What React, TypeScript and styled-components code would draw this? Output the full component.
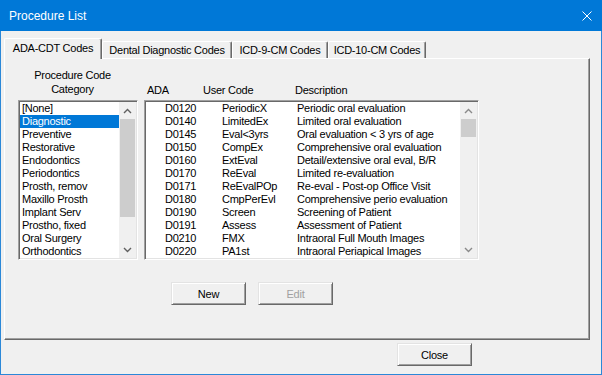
import React from 'react'
import styled, { createGlobalStyle } from 'styled-components'

const GlobalStyle = createGlobalStyle`
    html, body {
        margin: 0;
        padding: 0;
        background: #f0f0f0;
    }
    body {
        font-family: "Liberation Sans", Arial, sans-serif;
        font-size: 11px;
        letter-spacing: -0.25px;
        color: #000;
    }
    * {
        box-sizing: border-box;
    }
`

const Window = styled.div`
    width: 602px;
    height: 375px;
    display: flex;
    flex-direction: column;
    background: #f0f0f0;
    overflow: hidden;
`

const TitleBar = styled.div`
    height: 31px;
    flex: none;
    background: #0078d7;
    color: #fff;
    display: flex;
    align-items: center;
    justify-content: space-between;
    padding: 0 10px 0 9px;
    font-size: 12px;
    letter-spacing: 0;
`

const Body = styled.div`
    flex: 1;
    display: flex;
    flex-direction: column;
    border: 1px solid #2b88d8;
    border-top: none;
`

const TabStrip = styled.div`
    display: flex;
    align-items: flex-end;
    height: 21px;
    margin: 7px 0 -1px 3px;
    position: relative;
    z-index: 1;
`

const Tab = styled.div<{ $w: number; $selected?: boolean }>`
    width: ${p => p.$w}px;
    height: ${p => (p.$selected ? 21 : 17)}px;
    margin-bottom: ${p => (p.$selected ? 0 : 1)}px;
    display: flex;
    align-items: center;
    justify-content: center;
    background: #f0f0f0;
    border-top: 1px solid #fff;
    border-left: 1px solid #fff;
    border-right: 1px solid #696969;
    border-radius: 2px 2px 0 0;
    box-shadow: inset -1px 0 0 #a0a0a0;
    padding-bottom: ${p => (p.$selected ? 2 : 0)}px;
    white-space: nowrap;
`

const Panel = styled.div`
    margin-left: 3px;
    width: 586px;
    height: 282px;
    flex: none;
    border-top: 1px solid #fff;
    border-left: 1px solid #fff;
    border-right: 1px solid #696969;
    border-bottom: 1px solid #696969;
    box-shadow: inset -1px -1px 0 #a0a0a0;
    padding: 9px 0 0 13px;
    display: flex;
    flex-direction: column;
`

const TopRow = styled.div`
    display: flex;
    align-items: flex-start;
    gap: 6px;
`

const Column = styled.div<{ $w: number }>`
    width: ${p => p.$w}px;
    display: flex;
    flex-direction: column;
`

const CategoryLabel = styled.div`
    height: 28px;
    line-height: 14px;
    text-align: center;
    padding-right: 11px;
    margin-bottom: 4px;
`

const HeaderRow = styled.div`
    display: grid;
    grid-template-columns: 56px 92px 1fr;
    height: 14px;
    line-height: 14px;
    margin-top: 15px;
    margin-bottom: 3px;
    padding-left: 3px;
`

const ListFrame = styled.div<{ $h: number }>`
    height: ${p => p.$h}px;
    display: flex;
    background: #fff;
    border: 1px solid;
    border-color: #a0a0a0 #fff #fff #a0a0a0;
    box-shadow: inset 1px 1px 0 #696969, inset -1px -1px 0 #e3e3e3;
    padding: 1px;
    overflow: hidden;
`

const Items = styled.div`
    flex: 1;
    min-width: 0;
    overflow: hidden;
`

const CategoryItem = styled.div<{ $selected?: boolean }>`
    height: 13px;
    line-height: 13px;
    padding-left: 2px;
    white-space: nowrap;
    background: ${p => (p.$selected ? '#0078d7' : 'transparent')};
    color: ${p => (p.$selected ? '#fff' : '#000')};
`

const CodeRow = styled.div`
    display: grid;
    grid-template-columns: 57px 75px 1fr;
    height: 13px;
    line-height: 13px;
    padding-left: 19px;
    white-space: nowrap;
`

const ScrollBar = styled.div`
    width: 17px;
    flex: none;
    display: flex;
    flex-direction: column;
    background: #f0f0f0;
`

const ArrowBox = styled.div`
    height: 17px;
    flex: none;
    display: flex;
    align-items: center;
    justify-content: center;
`

const Track = styled.div`
    flex: 1;
`

const Thumb = styled.div<{ $h: number }>`
    height: ${p => p.$h}px;
    margin: 0 1px;
    background: #cdcdcd;
`

const ButtonRow = styled.div`
    display: flex;
    gap: 12px;
    margin-top: 22px;
    padding-left: 153px;
`

const Button = styled.div<{ $disabled?: boolean }>`
    width: 75px;
    height: 23px;
    display: flex;
    align-items: center;
    justify-content: center;
    background: #f0f0f0;
    border: 1px solid;
    border-color: #e3e3e3 #696969 #696969 #e3e3e3;
    box-shadow: inset 1px 1px 0 #fff, inset -1px -1px 0 #a0a0a0;
    color: ${p => (p.$disabled ? '#a0a0a0' : '#000')};
`

const Footer = styled.div`
    display: flex;
    margin-top: 3px;
    padding-left: 396px;
`

const Chevron = ({ up, color }: { up?: boolean; color: string }) => (
    <svg width="9" height="6" viewBox="0 0 9 6">
        <polyline
            points={up ? '1,5 4.5,1.5 8,5' : '1,1 4.5,4.5 8,1'}
            fill="none"
            stroke={color}
            strokeWidth="1.4"
        />
    </svg>
)

const Scroller = ({ thumb, color }: { thumb: number; color: string }) => (
    <ScrollBar>
        <ArrowBox><Chevron up color={color} /></ArrowBox>
        <Track><Thumb $h={thumb} /></Track>
        <ArrowBox><Chevron color={color} /></ArrowBox>
    </ScrollBar>
)

const tabs = [
    { label: 'ADA-CDT Codes', w: 98 },
    { label: 'Dental Diagnostic Codes', w: 130 },
    { label: 'ICD-9-CM Codes', w: 96 },
    { label: 'ICD-10-CM Codes', w: 98 },
]

const categories = ['[None]', 'Diagnostic', 'Preventive', 'Restorative', 'Endodontics', 'Periodontics', 'Prosth, remov', 'Maxillo Prosth', 'Implant Serv', 'Prostho, fixed', 'Oral Surgery', 'Orthodontics']

const codes = [
    ['D0120', 'PeriodicX', 'Periodic oral evaluation'],
    ['D0140', 'LimitedEx', 'Limited oral evaluation'],
    ['D0145', 'Eval<3yrs', 'Oral evaluation < 3 yrs of age'],
    ['D0150', 'CompEx', 'Comprehensive oral evaluation'],
    ['D0160', 'ExtEval', 'Detail/extensive oral eval, B/R'],
    ['D0170', 'ReEval', 'Limited re-evaluation'],
    ['D0171', 'ReEvalPOp', 'Re-eval - Post-op Office Visit'],
    ['D0180', 'CmpPerEvl', 'Comprehensive perio evaluation'],
    ['D0190', 'Screen', 'Screening of Patient'],
    ['D0191', 'Assess', 'Assessment of Patient'],
    ['D0210', 'FMX', 'Intraoral Full Mouth Images'],
    ['D0220', 'PA1st', 'Intraoral Periapical Images'],
]

export default function App() {
    return (
        <>
            <GlobalStyle />
            <Window>
                <TitleBar>
                    <span>Procedure List</span>
                    <svg width="10" height="10" viewBox="0 0 10 10">
                        <path d="M0.5 0.5 L9.5 9.5 M9.5 0.5 L0.5 9.5" stroke="#fff" strokeWidth="1" fill="none" />
                    </svg>
                </TitleBar>
                <Body>
                    <TabStrip>
                        {tabs.map((t, idx) => (
                            <Tab key={t.label} $w={t.w} $selected={idx === 0}>{t.label}</Tab>
                        ))}
                    </TabStrip>
                    <Panel>
                        <TopRow>
                            <Column $w={120}>
                                <CategoryLabel>Procedure Code<br />Category</CategoryLabel>
                                <ListFrame $h={160}>
                                    <Items>
                                        {categories.map((c, idx) => (
                                            <CategoryItem key={c} $selected={idx === 1}>{c}</CategoryItem>
                                        ))}
                                    </Items>
                                    <Scroller thumb={98} color="#606060" />
                                </ListFrame>
                            </Column>
                            <Column $w={335}>
                                <HeaderRow>
                                    <span>ADA</span>
                                    <span>User Code</span>
                                    <span>Description</span>
                                </HeaderRow>
                                <ListFrame $h={160}>
                                    <Items>
                                        {codes.map(row => (
                                            <CodeRow key={row[0]}>
                                                <span>{row[0]}</span>
                                                <span>{row[1]}</span>
                                                <span>{row[2]}</span>
                                            </CodeRow>
                                        ))}
                                    </Items>
                                    <Scroller thumb={18} color="#8a8a8a" />
                                </ListFrame>
                            </Column>
                        </TopRow>
                        <ButtonRow>
                            <Button>New</Button>
                            <Button $disabled>Edit</Button>
                        </ButtonRow>
                    </Panel>
                    <Footer>
                        <Button>Close</Button>
                    </Footer>
                </Body>
            </Window>
        </>
    )
}
